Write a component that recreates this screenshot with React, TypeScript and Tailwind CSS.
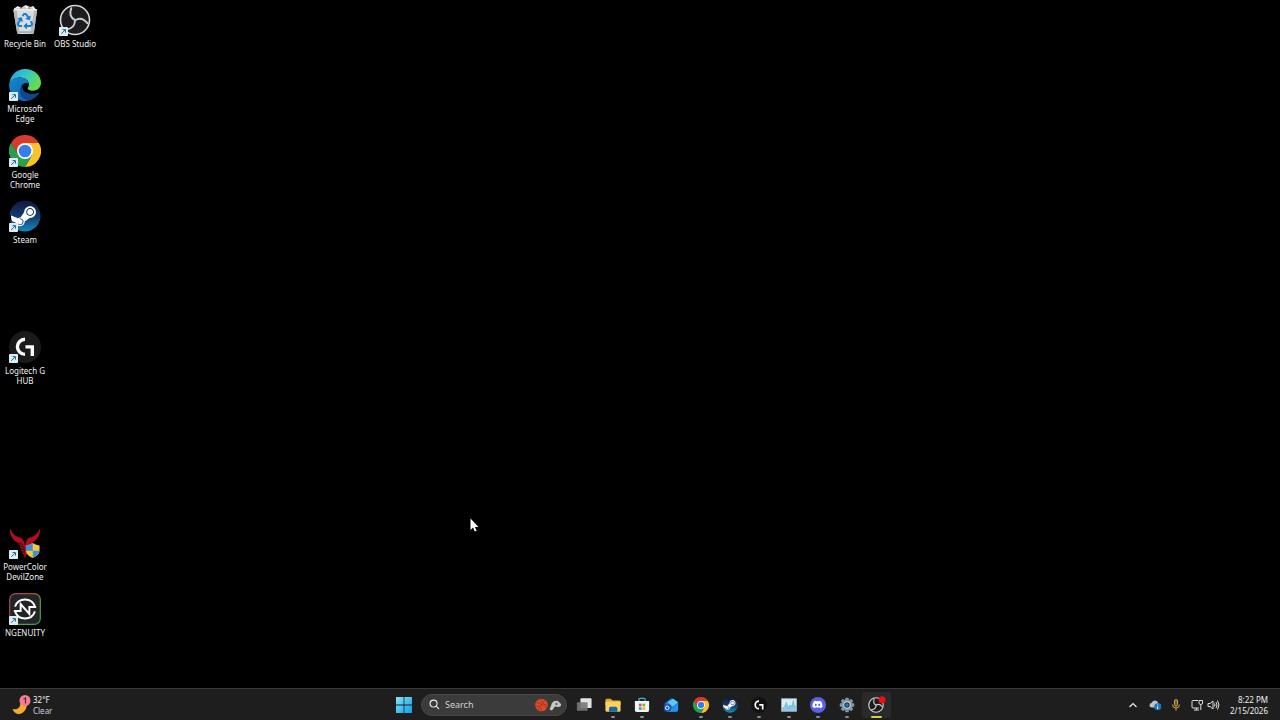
import type { ReactNode } from "react";
import { FaDiscord, FaRecycle, FaSteam } from "react-icons/fa";

function Shortcut() {
  return (
    <svg viewBox="0 0 9 9" className="absolute bottom-0 left-0 h-[9px] w-[9px]" aria-hidden="true">
      <rect width="9" height="9" rx="0.8" fill="#dcecf4" />
      <path d="M2.3 6.8 L6.2 2.9 M3.5 2.6 H6.5 V5.6" fill="none" stroke="#20698f" strokeWidth="1" />
    </svg>
  );
}

function RecycleBin() {
  return (
    <div className="relative h-full w-full">
      <svg viewBox="0 0 33 33" className="h-full w-full">
        <path d="M5 5 L9 2 L13 4 L17 1 L22 3 L25 2 L28 6 L27 9 H6 Z" fill="#eef0f1" />
        <path d="M8 4 L12 5 L15 2 L19 5 L24 3 L26 8 L7 8 Z" fill="#c4c9cc" />
        <path d="M11 3 l2 1 l-1 2z M20 2 l2 2 l-2 2z" fill="#d0794e" />
        <path d="M4.5 6 L29 6 L25.6 30 Q25.4 31 24 31 H10 Q8.600 31 8.400 30 Z" fill="#d9dde0" />
        <path d="M4.500 6 L8.400 30 L11 31 L8 6 Z M29 6 L25.600 30 L22 31 L26 6 Z" fill="#b3b8bd" />
        <path d="M5 6 H29" stroke="#f8fafb" strokeWidth="1" />
        <path d="M8.500 29 H25.500" stroke="#a7adb2" strokeWidth="2" />
      </svg>
      <FaRecycle className="absolute top-[9px] left-2 h-[16px] w-[16px]" color="#1580d0" />
    </div>
  );
}

function Obs({ recording = false }: { recording?: boolean }) {
  const blade = "M12.300 4.200 C10.500 9 11 13.500 16 16.200";
  return (
    <svg viewBox="0 0 32 32" className="h-full w-full overflow-visible">
      <circle cx="16" cy="16" r="14.500" fill="#1c1b1d" stroke="#d6d6d8" strokeWidth={recording ? 2.2 : 1.6} />
      <g fill="none" stroke="#cdcdd0" strokeWidth={recording ? 2.2 : 1.9} strokeLinecap="round">
        <path d={blade} />
        <path d={blade} transform="rotate(120 16 16.3)" />
        <path d={blade} transform="rotate(240 16 16.3)" />
      </g>
      {recording && <circle cx="28" cy="5.500" r="7" fill="#f50a12" />}
    </svg>
  );
}

function Edge() {
  return (
    <svg viewBox="0 0 32 32" className="h-full w-full">
      <defs>
        <linearGradient id="edge-top" x1="0" y1="0" x2="1" y2="0.500">
          <stop offset="0" stopColor="#239be0" />
          <stop offset="0.500" stopColor="#32c6cf" />
          <stop offset="1" stopColor="#67dc4c" />
        </linearGradient>
        <linearGradient id="edge-left" x1="0" y1="0" x2="0.600" y2="1">
          <stop offset="0" stopColor="#1685cc" />
          <stop offset="1" stopColor="#1267b4" />
        </linearGradient>
      </defs>
      <path d="M0.500 15 C1 6.500 7.500 0 16 0 C25.500 0 32 6.500 32 13.500 C32 18.500 28.500 21.700 24 21.700 C20.500 21.700 18.700 20.500 18.700 19.500 C18.700 18.500 20 18 20 15.500 C20 11.500 16 8.500 11 8.500 C6 8.500 2 11 0.500 15 Z" fill="url(#edge-top)" />
      <path d="M0 16 C0.500 11.500 5.500 8.500 11 8.500 C16 8.500 20 11.500 20 15.500 C17.500 12.500 13 14.500 12 18.500 C10.700 24 15 29.500 20.500 31.500 C8.500 34 0 26 0 16 Z" fill="url(#edge-left)" />
      <path d="M13 16.500 C8.500 22 11 29.700 20 31.500 C24.500 30.500 28 27.700 30 24.500 C30.500 23.600 29.900 23.300 29 23.700 C21.500 27 13 23.500 13 16.500 Z" fill="#12458f" />
    </svg>
  );
}

function Chrome() {
  return (
    <svg viewBox="0 0 32 32" className="h-full w-full">
      <path d="M16 16 L2.140 8 A16 16 0 0 1 29.860 8 Z" fill="#d93a2e" />
      <path d="M16 8 H29.860 A16 16 0 0 1 16 32 L22.930 20 Z" fill="#f8c32b" />
      <path d="M2.140 8 L9.070 20 L16 24 L22.930 20 L16 32 A16 16 0 0 1 2.140 8 Z" fill="#2a9f4b" />
      <path d="M9.070 20 L2.140 8 H16 Z" fill="#d93a2e" />
      <path d="M9.070 20 L2.140 8 A16 16 0 0 0 0 16 L8 23 Z" fill="#2a9f4b" />
      <circle cx="16" cy="16" r="8" fill="#fff" />
      <circle cx="16" cy="16" r="6.300" fill="#347ee7" />
    </svg>
  );
}

function Steam({ id }: { id: string }) {
  return (
    <div className="relative h-full w-full">
      <svg viewBox="0 0 32 32" className="absolute inset-0 h-full w-full">
        <defs>
          <linearGradient id={id} x1="0" y1="0" x2="0" y2="1">
            <stop offset="0" stopColor="#14183d" />
            <stop offset="0.500" stopColor="#123a6d" />
            <stop offset="1" stopColor="#178ab8" />
          </linearGradient>
        </defs>
        <circle cx="16" cy="16" r="14" fill="#fff" />
      </svg>
      <FaSteam className="absolute inset-0 h-full w-full" fill={`url(#${id})`} />
    </div>
  );
}

function LogitechG({ disc = "#1a1a1b" }: { disc?: string }) {
  return (
    <svg viewBox="0 0 32 32" className="h-full w-full">
      <circle cx="16" cy="16" r="16" fill={disc} />
      <path d="M16 6.500 A9.300 9.300 0 0 0 16 25.100 V21.700 A5.900 5.900 0 0 1 16 9.900 Z M16.500 14.200 H25 V25 H21.600 V17.600 H16.500 Z" fill="#fff" />
    </svg>
  );
}

function DevilZone() {
  return (
    <svg viewBox="0 0 33 33" className="h-full w-full">
      <path d="M1 1 C0.500 9 4 13.500 9.500 16.500 C12 19 12 24 15 29 L16.500 32 L18 29 C21 24 21 19 23.500 16.500 C29 13.500 32.500 9 32 1 C30 7 26 10 21 11 C18.500 12 17.500 15 16.500 19 C15.500 15 14.500 12 12 11 C7 10 3 7 1 1 Z" fill="#b50c1a" />
      <path d="M9.500 16 C12 19 12 24 15 29 L16.500 32 L16.500 22 C15 18 13 15 9.500 16 Z" fill="#67101a" />
      <path d="M24.500 16.500 Q28 19 31.500 19 V24 Q31.500 29 24.500 32 Q17.500 29 17.500 24 V19 Q21 19 24.500 16.500 Z" fill="#f8c638" />
      <path d="M24.500 16.500 V24.500 H17.500 V19 Q21 19 24.500 16.500 Z M24.500 24.500 H31.500 Q31 29 24.500 32 Z" fill="#3d91d4" />
    </svg>
  );
}

function Ngenuity() {
  return (
    <svg viewBox="0 0 33 33" className="h-full w-full">
      <defs>
        <linearGradient id="ng-edge" x1="0" y1="0" x2="1" y2="1">
          <stop offset="0" stopColor="#9a4a80" />
          <stop offset="0.350" stopColor="#a44b3c" />
          <stop offset="0.600" stopColor="#6c9b38" />
          <stop offset="1" stopColor="#30a066" />
        </linearGradient>
      </defs>
      <rect x="0.700" y="0.700" width="31.600" height="31.600" rx="6" fill="#242326" stroke="url(#ng-edge)" strokeWidth="1.200" />
      <g fill="none" stroke="#fff" strokeWidth="2">
        <path d="M6.200 14 A10.900 10.900 0 0 1 26.800 14 M26.800 19 A10.900 10.900 0 0 1 6.200 19" />
        <path d="M5 18.500 H12 V11.500 L21 21.500 V14.500 H28" />
      </g>
    </svg>
  );
}

type DesktopItem = { name: string; place: string; icon: ReactNode; shortcut: boolean };

const desktopItems: DesktopItem[] = [
  { name: "Recycle Bin", place: "col-start-1 row-start-1", icon: <RecycleBin />, shortcut: false },
  { name: "Microsoft Edge", place: "col-start-1 row-start-2", icon: <Edge />, shortcut: true },
  { name: "Google Chrome", place: "col-start-1 row-start-3", icon: <Chrome />, shortcut: true },
  { name: "Steam", place: "col-start-1 row-start-4", icon: <Steam id="steam-desktop" />, shortcut: true },
  { name: "Logitech G HUB", place: "col-start-1 row-start-6", icon: <LogitechG />, shortcut: true },
  { name: "PowerColor DevilZone", place: "col-start-1 row-start-9", icon: <DevilZone />, shortcut: true },
  { name: "NGENUITY", place: "col-start-1 row-start-10", icon: <Ngenuity />, shortcut: true },
  { name: "OBS Studio", place: "col-start-2 row-start-1", icon: <Obs />, shortcut: true },
];

function TaskView() {
  return (
    <svg viewBox="0 0 18 18" className="h-full w-full">
      <rect x="5" y="1.500" width="12.500" height="11" rx="1" fill="#e3e3e3" />
      <rect x="1" y="6" width="12" height="9.500" rx="1" fill="#777" fillOpacity="0.900" />
    </svg>
  );
}

function Explorer() {
  return (
    <svg viewBox="0 0 18 18" className="h-full w-full">
      <path d="M0.500 3.500 Q0.500 2 2 2 H6.500 L8.500 4 H16 Q17.500 4 17.500 5.500 V9 H0.500 Z" fill="#e5a52b" />
      <rect x="0.500" y="5" width="17" height="11.500" rx="1.200" fill="#fbd260" />
      <path d="M4.500 16.500 V13 Q4.500 11 6.500 11 H12 Q14 11 14 13 V16.500 Z" fill="#1769aa" />
    </svg>
  );
}

function Store() {
  return (
    <svg viewBox="0 0 18 18" className="h-full w-full">
      <path d="M5.500 5 V2.800 Q5.500 1.500 6.800 1.500 H11.200 Q12.500 1.500 12.500 2.800 V5" fill="none" stroke="#3fb4dd" strokeWidth="1.300" />
      <path d="M1 4.500 H17 V14.500 Q17 17 14.500 17 H3.500 Q1 17 1 14.500 Z" fill="#f3f5f6" />
      <path d="M5.500 7.500 h3 v3 h-3z" fill="#e84c2b" />
      <path d="M9.500 7.500 h3 v3 h-3z" fill="#71b72b" />
      <path d="M5.500 11.500 h3 v3 h-3z" fill="#269edd" />
      <path d="M9.500 11.500 h3 v3 h-3z" fill="#f5b51d" />
    </svg>
  );
}

function Outlook() {
  return (
    <svg viewBox="0 0 18 18" className="h-full w-full">
      <path d="M2 7 L8.500 2 Q10 1 11.500 2 L17 6 V14 Q17 16.500 14.500 16.500 H5 Q2 16.500 2 13.500 Z" fill="#1976d3" />
      <path d="M5 6 L11.500 2 L17 6 L11 11 Z" fill="#5dc7f6" />
      <path d="M17 7 V14 Q17 16.500 14.500 16.500 H6 Z" fill="#2993ea" />
      <rect x="1" y="8.500" width="7.500" height="7.500" rx="1.200" fill="#124fae" />
      <circle cx="4.800" cy="12.200" r="2" fill="none" stroke="#fff" strokeWidth="1.100" />
    </svg>
  );
}

function Monitor() {
  return (
    <svg viewBox="0 0 18 18" className="h-full w-full">
      <rect x="0.700" y="2" width="16.600" height="14" fill="#d9edf5" stroke="#a7bbc5" />
      <path d="M1 13 L4 11 L6 6 L8 13 L10 9 L12 11 L14 4 L15 11 L17 10 V15.500 H1 Z" fill="#8bc8e5" />
      <path d="M1.500 13 L4 11 L6 6 L8 13 L10 9 L12 11 L14 4 L15 11 L16.500 10" fill="none" stroke="#5badd2" strokeWidth="0.800" />
    </svg>
  );
}

function Discord() {
  return (
    <div className="flex h-full w-full items-center justify-center rounded-full bg-[#5861ea]">
      <FaDiscord className="h-[11px] w-[11px]" color="#fff" />
    </div>
  );
}

function Settings() {
  return (
    <svg viewBox="0 0 18 18" className="h-full w-full">
      <g fill="#8195a5">
        <rect x="7" y="0.800" width="4" height="16.400" rx="1" />
        <rect x="7" y="0.800" width="4" height="16.400" rx="1" transform="rotate(45 9 9)" />
        <rect x="7" y="0.800" width="4" height="16.400" rx="1" transform="rotate(90 9 9)" />
        <rect x="7" y="0.800" width="4" height="16.400" rx="1" transform="rotate(135 9 9)" />
        <circle cx="9" cy="9" r="6.300" />
      </g>
      <circle cx="9" cy="9" r="3.700" fill="#1d303e" stroke="#d4e2ec" strokeWidth="1.200" />
      <circle cx="9" cy="9" r="2" fill="#287fbd" />
    </svg>
  );
}

type Task = { name: string; icon: ReactNode; state: "idle" | "open" | "active" };

const tasks: Task[] = [
  { name: "Task view", icon: <TaskView />, state: "idle" },
  { name: "File Explorer", icon: <Explorer />, state: "open" },
  { name: "Microsoft Store", icon: <Store />, state: "open" },
  { name: "Outlook", icon: <Outlook />, state: "idle" },
  { name: "Google Chrome", icon: <Chrome />, state: "open" },
  { name: "Steam", icon: <Steam id="steam-task" />, state: "open" },
  { name: "Logitech G HUB", icon: <LogitechG disc="#111112" />, state: "open" },
  { name: "Task Manager", icon: <Monitor />, state: "open" },
  { name: "Discord", icon: <Discord />, state: "open" },
  { name: "Settings", icon: <Settings />, state: "open" },
  { name: "OBS Studio", icon: <Obs recording />, state: "active" },
];

function TaskButton({ task }: { task: Task }) {
  const active = task.state === "active";
  return (
    <button
      aria-label={task.name}
      className={`relative flex h-[26px] items-center justify-center rounded-[3px] ${active ? "bg-[#2a2a2a]" : ""}`}
    >
      <span className="block h-4 w-4">{task.icon}</span>
      {task.state === "open" && <span className="absolute bottom-0 h-[2px] w-1 rounded-full bg-[#8c8c8c]" />}
      {active && <span className="absolute bottom-0 h-[2px] w-[11px] rounded-full bg-[#d8ce4c]" />}
    </button>
  );
}

function Weather() {
  return (
    <button className="flex items-center gap-px text-left text-[8px] leading-[11px]">
      <svg viewBox="0 0 20 22" className="h-[22px] w-5" aria-hidden="true">
        <path d="M14 6 C17 13 12 21 5.500 20 Q2 19 0.500 15 C5 16.500 9.500 13 8 8 Z" fill="#f4aa32" />
        <circle cx="13" cy="6.500" r="5.500" fill="#f27f91" />
        <path d="M11.500 5.300 L13.500 4 V9.500" fill="none" stroke="#701e33" strokeWidth="1.200" />
      </svg>
      <span>
        <span className="block">32°F</span>
        <span className="block text-[#d0d0d0]">Clear</span>
      </span>
    </button>
  );
}

function SearchBox() {
  return (
    <label className="flex h-[22px] w-[146px] items-center rounded-full border border-[#484848] bg-[#3b3b3b] pr-1 pl-[7px]">
      <svg viewBox="0 0 12 12" className="h-[11px] w-[11px] shrink-0" fill="none" stroke="#eee" strokeWidth="1.200" aria-hidden="true">
        <circle cx="5" cy="5" r="3.800" />
        <path d="M7.800 7.800 L11 11" />
      </svg>
      <input
        type="search"
        aria-label="Search"
        placeholder="Search"
        className="ml-[5px] min-w-0 flex-1 bg-transparent text-[9px] leading-3 text-white outline-none placeholder:text-[#d2d2d2]"
      />
      <svg viewBox="0 0 28 16" className="h-4 w-7 shrink-0" aria-hidden="true">
        <circle cx="7.500" cy="8" r="6.300" fill="#dd4b2a" />
        <path d="M2 5 Q8 7 13 11 M11 3 Q7 8 4 13 M7 2 Q8 8 13 8 M1.500 9 Q7 9 8 14" fill="none" stroke="#93301e" strokeWidth="0.700" />
        <path d="M15.500 12.500 L18 6 Q20 3 24 4 L27 7 Q27.500 10 24 10 L21 9.500 L18 13.500 Z" fill="#c9c8c5" />
        <circle cx="22.500" cy="7" r="1.200" fill="#636363" />
      </svg>
    </label>
  );
}

function Tray() {
  return (
    <div className="flex items-center justify-end pr-3">
      <button aria-label="Show hidden icons" className="mr-[11px]">
        <svg viewBox="0 0 10 8" className="h-2 w-[10px]" fill="none" stroke="#eee" strokeWidth="1.200">
          <path d="M1.500 6 L5 2.500 L8.500 6" />
        </svg>
      </button>
      <button aria-label="OneDrive" className="mr-[9px]">
        <svg viewBox="0 0 13 12" className="h-3 w-[13px]">
          <path d="M3 8.500 Q0.500 8.500 0.500 6 Q0.700 4 2.500 4 Q3.500 1 6.500 1.500 Q9 2 9.300 4.500 Q12 4.700 12 7 L10 8.500 Z" fill="#bdc5ca" />
          <circle cx="8.700" cy="7.800" r="3.500" fill="#1677c2" />
          <path d="M8.700 7.300 V10 M8.700 5.500 V6.400" stroke="#fff" strokeWidth="1" />
        </svg>
      </button>
      <button aria-label="Microphone in use" className="mr-[9px]">
        <svg viewBox="0 0 10 12" className="h-3 w-[10px]" fill="none" stroke="#d5a546" strokeWidth="1">
          <rect x="3.500" y="0.600" width="3" height="6.500" rx="1.500" fill="#695632" />
          <path d="M1.500 5.500 Q1.500 9 5 9 Q8.500 9 8.500 5.500 M5 9 V11.700" />
        </svg>
      </button>
      <button aria-label="Network and volume" className="mr-[10px] flex gap-1">
        <svg viewBox="0 0 13 12" className="h-3 w-[13px]" fill="none" stroke="#ddd" strokeWidth="1">
          <path d="M8 1.500 H3 Q2 1.500 2 2.500 V8 Q2 9 3 9 H9 M4 11 H9 M6.500 9 V11" />
          <path d="M9 1.500 H12.500 V4 Q12.500 5.500 10.800 5.500 Q9 5.500 9 4 Z M10.800 5.500 V11" />
        </svg>
        <svg viewBox="0 0 13 12" className="h-3 w-[13px]" fill="none" stroke="#ddd" strokeWidth="1">
          <path d="M1 4.500 H3 L6 2 V10 L3 7.500 H1 Z M7.500 4.500 Q8.500 6 7.500 7.500 M9 3 Q11 6 9 9 M10.500 1.500 Q13.500 6 10.500 10.500" />
        </svg>
      </button>
      <button className="text-right text-[8px] leading-[11px]">
        <span className="block">8:22 PM</span>
        <span className="block">2/15/2026</span>
      </button>
    </div>
  );
}

export default function App() {
  return (
    <div className="relative flex h-screen flex-col overflow-hidden bg-black font-['Noto_Sans','Open_Sans',sans-serif] text-[#f0f0f0]">
      <main className="grid min-h-0 flex-1 auto-cols-[50px] grid-rows-10 content-stretch pb-[34px]">
        {desktopItems.map((item) => (
          <button key={item.name} className={`flex flex-col items-center pt-1 ${item.place}`}>
            <span className="relative block h-8 w-8 shrink-0">
              {item.icon}
              {item.shortcut && <Shortcut />}
            </span>
            <span className="mt-[3px] w-[46px] text-center text-[8px] leading-[10px]">{item.name}</span>
          </button>
        ))}
      </main>

      <footer className="grid h-8 shrink-0 grid-cols-[1fr_auto_1fr] items-center border-t border-[#393939] bg-[#1e1e1e]">
        <div className="flex pl-3">
          <Weather />
        </div>
        <nav aria-label="Taskbar" className="flex items-center pl-[7px]">
          <button aria-label="Start" className="mr-[9px]">
            <svg viewBox="0 0 16 16" className="h-4 w-4">
              <defs>
                <linearGradient id="start-fill" x1="0" y1="0" x2="1" y2="1">
                  <stop offset="0" stopColor="#82e4fb" />
                  <stop offset="1" stopColor="#119de6" />
                </linearGradient>
              </defs>
              <path d="M0 0 H7.600 V7.600 H0 Z M8.400 0 H16 V7.600 H8.400 Z M0 8.400 H7.600 V16 H0 Z M8.400 8.400 H16 V16 H8.400 Z" fill="url(#start-fill)" />
            </svg>
          </button>
          <SearchBox />
          <div className="ml-[2px] grid w-[322px] grid-cols-11">
            {tasks.map((task) => (
              <TaskButton key={task.name} task={task} />
            ))}
          </div>
        </nav>
        <Tray />
      </footer>

      <svg viewBox="0 0 10 15" className="pointer-events-none absolute top-[518px] left-[470px] h-[15px] w-[10px]" aria-hidden="true">
        <path d="M0.500 0.500 V12 L3 9.600 L4.800 13.600 L6.600 12.800 L4.900 9 H8.500 Z" fill="#fff" />
      </svg>
    </div>
  );
}
